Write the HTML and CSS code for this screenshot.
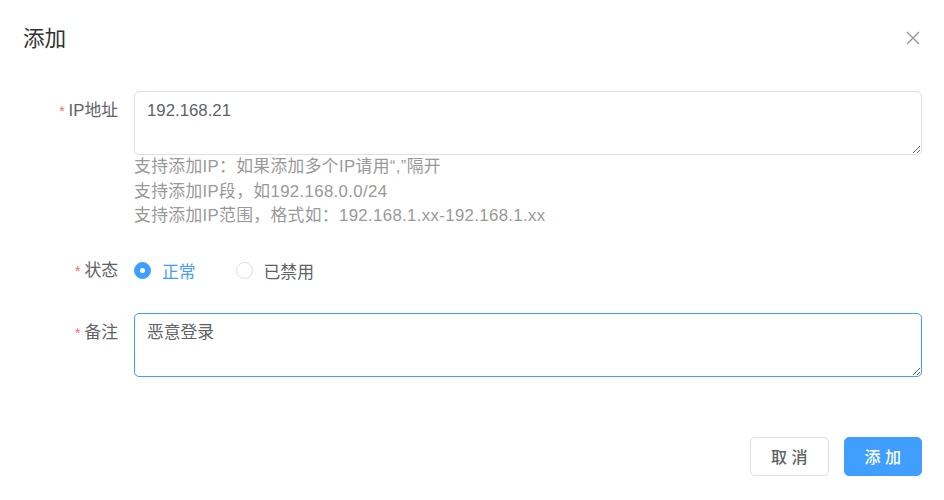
FILE: index.html
```html
<!DOCTYPE html>
<html lang="zh">
<head>
<meta charset="utf-8">
<link rel="stylesheet" href="styles.css">
</head>
<body>
<div class="dialog">
  <div class="header">
    <span class="title">添加</span>
    <span class="close" aria-label="close">
      <svg width="14" height="14" viewBox="0 0 14 14"><path d="M1 1 L13 13 M13 1 L1 13" stroke="#909399" stroke-width="1.3" fill="none"/></svg>
    </span>
  </div>
  <div class="body">
    <div class="item">
      <label class="label"><span class="star">*</span>IP地址</label>
      <div class="content">
        <textarea class="textarea" rows="2">192.168.21</textarea>
        <div class="hint">
          <div>支持添加IP：如果添加多个IP请用“,”隔开</div>
          <div>支持添加IP段，如192.168.0.0/24</div>
          <div>支持添加IP范围，格式如：192.168.1.xx-192.168.1.xx</div>
        </div>
      </div>
    </div>
    <div class="item">
      <label class="label"><span class="star">*</span>状态</label>
      <div class="content radios">
        <span class="radio checked"><span class="dot"></span><span class="rtext">正常</span></span>
        <span class="radio"><span class="dot"></span><span class="rtext">已禁用</span></span>
      </div>
    </div>
    <div class="item">
      <label class="label"><span class="star">*</span>备注</label>
      <div class="content">
        <textarea class="textarea focused" rows="2">恶意登录</textarea>
      </div>
    </div>
  </div>
  <div class="footer">
    <button class="btn">取 消</button>
    <button class="btn primary">添 加</button>
  </div>
</div>
</body>
</html>
```
FILE: styles.css
```css
* { box-sizing: border-box; }
html, body { margin: 0; padding: 0; background: #fff; }
body {
  font-family: "Liberation Sans", "Noto Sans CJK SC", sans-serif;
  color: #606266;
  width: 944px;
  height: 500px;
  overflow: hidden;
}
.dialog { width: 944px; }
.header {
  display: flex;
  justify-content: space-between;
  align-items: center;
  padding: 24px 24px 12px 23px;
}
.title {
  font-size: 21.6px;
  line-height: 29px;
  color: #303133;
}
.close { display: flex; width: 14px; height: 14px; margin-top: -1px; }
.body { padding: 26px 22px 26px 24px; }
.item { display: flex; margin-bottom: 22px; }
.label {
  width: 110px;
  flex: none;
  text-align: right;
  padding-right: 16px;
  font-size: 16.8px;
  line-height: 40px;
  color: #606266;
}
.star { color: #f56c6c; margin-right: 4px; font-size: 14px; }
.content { flex: 1; min-width: 0; }
.textarea {
  display: block;
  width: 100%;
  height: 64px;
  padding: 6px 12px;
  font-family: "Liberation Sans", "Noto Sans CJK SC", sans-serif;
  font-size: 16.8px;
  line-height: 25px;
  color: #606266;
  border: 1px solid #dcdfe6;
  border-radius: 5px;
  outline: none;
  resize: vertical;
  background: #fff;
}
.textarea.focused { border-color: #409eff; }
.hint {
  font-size: 16.8px;
  line-height: 24.5px;
  letter-spacing: 0.35px;
  color: #999;
}
.radios { display: flex; align-items: center; height: 40px; }
.radio { display: inline-flex; align-items: center; margin-right: 40px; }
.dot {
  width: 17px;
  height: 17px;
  border-radius: 50%;
  border: 1px solid #dcdfe6;
  background: #fff;
  position: relative;
  flex: none;
}
.radio.checked .dot { background: #409eff; border-color: #409eff; }
.radio.checked .dot::after {
  content: "";
  position: absolute;
  left: 50%; top: 50%;
  width: 5px; height: 5px;
  margin: -2.5px 0 0 -2.5px;
  border-radius: 50%;
  background: #fff;
}
.rtext { font-size: 16.8px; padding-left: 11px; color: #606266; }
.radio.checked .rtext { color: #409eff; }
.footer {
  display: flex;
  justify-content: flex-end;
  gap: 15px;
  padding: 12px 22px 24px 24px;
}
.btn {
  height: 39px;
  padding: 0 20px;
  font-family: "Liberation Sans", "Noto Sans CJK SC", sans-serif;
  font-size: 16px;
  font-weight: 500;
  color: #606266;
  background: #fff;
  border: 1px solid #dcdfe6;
  border-radius: 5px;
}
.btn.primary { background: #409eff; border-color: #409eff; color: #fff; }
```
